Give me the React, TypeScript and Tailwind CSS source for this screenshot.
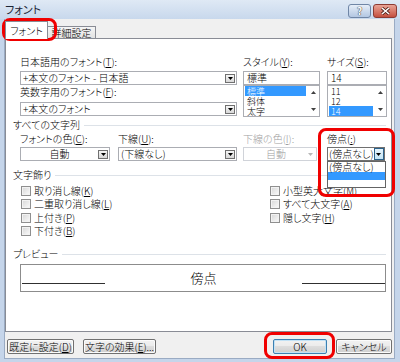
import React from 'react'
import clsx from 'clsx'

const jp = "font-['Noto_Sans_CJK_JP',sans-serif] [font-feature-settings:'palt']"

function Key({ k }: { k: string }) {
  return <span className="underline underline-offset-[1px]">{k}</span>
}

function Label({ children, className }: { children: React.ReactNode; className?: string }) {
  return <div className={clsx('h-[12px] whitespace-nowrap leading-[12px]', className)}>{children}</div>
}

function Tri({ up, color = '#000' }: { up?: boolean; color?: string }) {
  return (
    <svg width="5" height="3" viewBox="0 0 5 3">
      <path d={up ? 'M2.5 0L5 3H0z' : 'M0 0h5L2.5 3z'} fill={color} />
    </svg>
  )
}

function ArrowBtn() {
  return (
    <div className="flex h-[9px] w-[10px] shrink-0 items-center justify-center border border-[#707070] bg-gradient-to-b from-[#f6f6f6] to-[#d8d8d8]">
      <Tri />
    </div>
  )
}

function Combo({ children, className, center }: { children: React.ReactNode; className?: string; center?: boolean }) {
  return (
    <div className={clsx('flex h-[14px] items-center border border-[#abadb3] bg-white pr-[1px]', className)}>
      <span className={clsx('flex-1 whitespace-nowrap leading-[12px]', center ? 'text-center' : 'pl-[2px]')}>
        {children}
      </span>
      <ArrowBtn />
    </div>
  )
}

function TextBox({ children, className }: { children: React.ReactNode; className?: string }) {
  return (
    <div className={clsx('h-[14px] border border-[#abadb3] bg-white pl-[3px] leading-[12px]', className)}>{children}</div>
  )
}

function ListBox({ items, selected }: { items: string[]; selected: number }) {
  return (
    <div className="flex h-[32px] border border-[#abadb3] bg-white">
      <div className="flex-1 pl-[1px] pr-[1px]">
        {items.map((it, i) => (
          <div
            key={it}
            className={clsx(
              'flex h-[10px] items-center pl-[2px] text-[9px] leading-[9px]',
              i === selected && 'bg-[#3399ff] text-white'
            )}
          >
            {it}
          </div>
        ))}
      </div>
      <div className="flex w-[12px] flex-col items-center justify-between py-[5px]">
        <Tri up color="#404040" />
        <Tri color="#404040" />
      </div>
    </div>
  )
}

function Section({ title, className }: { title: string; className?: string }) {
  return (
    <div className={clsx('flex h-[12px] items-center pl-[7px] pr-[5px]', className)}>
      <span className="whitespace-nowrap leading-[12px]">{title}</span>
      <div className="ml-[4px] h-px flex-1 bg-[#dde2e8]" />
    </div>
  )
}

function Check({ children }: { children: React.ReactNode }) {
  return (
    <div className="flex h-[13.5px] items-center">
      <span className="mr-[3px] h-[10px] w-[10px] shrink-0 border border-[#8f8f8f] bg-gradient-to-br from-[#d6d6d6] to-[#fbfbfb] shadow-[inset_0_0_0_1px_#f2f2f2]" />
      <span className="whitespace-nowrap leading-[12px]">{children}</span>
    </div>
  )
}

function Btn({ children, className, primary }: { children: React.ReactNode; className?: string; primary?: boolean }) {
  return (
    <div
      className={clsx(
        'flex h-[15px] items-center justify-center whitespace-nowrap rounded-[2px] border bg-[linear-gradient(#f2f2f2,#ebebeb_50%,#dddddd_50%,#cfcfcf)] leading-[12px]',
        primary ? 'border-[#3c7fb1] shadow-[inset_0_0_0_1px_#c2e2f6]' : 'border-[#707070] shadow-[inset_0_0_0_1px_#fbfbfb]',
        className
      )}
    >
      {children}
    </div>
  )
}

function RedBox({ className }: { className: string }) {
  return <div className={clsx('pointer-events-none absolute rounded-[8px] border-[3px] border-[#f00000]', className)} />
}

export default function App() {
  return (
    <div className={clsx('relative h-[362px] w-[400px] overflow-hidden bg-[#c5d5ea] text-[10px] font-light text-black', jp)}>
      {/* title bar */}
      <div className="flex h-[19px] items-start justify-between bg-gradient-to-b from-[#dfe9f5] to-[#c8d8ec] pl-[5px] pr-[3px]">
        <span className="mt-[2px] text-[11px] font-normal leading-[14px] text-[#1b2536]">フォント</span>
        <div className="mt-[4px] flex gap-[2px]">
          <div className="flex h-[14px] w-[23px] items-center justify-center rounded-[3px] border border-[#6f86a6] bg-gradient-to-b from-[#e6eef8] to-[#b3c7e2] text-[10px] font-bold leading-none text-white [text-shadow:0_0_1px_#333,0_0_1px_#333]">
            ?
          </div>
          <div className="flex h-[14px] w-[24px] items-center justify-center rounded-[3px] border border-[#8c3b33] bg-gradient-to-b from-[#e9a396] to-[#c44f3f]">
            <svg width="9" height="8" viewBox="0 0 9 8">
              <path d="M1 1l7 6M8 1L1 7" stroke="#4a1a14" strokeWidth="3" />
              <path d="M1 1l7 6M8 1L1 7" stroke="#fff" strokeWidth="1.6" />
            </svg>
          </div>
        </div>
      </div>

      {/* client */}
      <div className="ml-[4px] h-[340px] w-[391px] border-x border-b border-[#9aabc3] bg-[#f0f0f0] pt-[2px]">
        {/* tabs */}
        <div className="flex h-[17px] items-end">
          <div className="relative z-10 -mb-px flex h-[18px] w-[43px] items-center justify-center border-x border-t border-[#898c95] bg-white pt-[1px] leading-[12px]">
            フォント
          </div>
          <div className="flex h-[12px] w-[48px] items-center justify-center border-r border-t border-[#898c95] bg-gradient-to-b from-[#f5f5f5] to-[#e3e3e3] leading-[12px]">
            詳細設定
          </div>
        </div>

        {/* panel */}
        <div className="h-[294px] w-[387px] border border-[#898c95] bg-white pt-[17px]">
          <div className="flex pl-[14px]">
            <div className="w-[217px]">
              <Label>
                日本語用のフォント(<Key k="T" />):
              </Label>
              <Combo className="mt-[3px]">+本文のフォント - 日本語</Combo>
              <Label className="mt-[1px]">
                英数字用のフォント(<Key k="F" />):
              </Label>
              <Combo className="mt-[4px]">+本文のフォント</Combo>
            </div>
            <div className="ml-[6px] w-[77px]">
              <Label>
                スタイル(<Key k="Y" />):
              </Label>
              <TextBox className="mt-[3px]">標準</TextBox>
              <ListBox items={['標準', '斜体', '太字']} selected={0} />
            </div>
            <div className="ml-[7px] w-[60px]">
              <Label>
                サイズ(<Key k="S" />):
              </Label>
              <TextBox className="mt-[3px]">14</TextBox>
              <ListBox items={['11', '12', '14']} selected={2} />
            </div>
          </div>

          <Section className="mt-[2px]" title="すべての文字列" />
          <div className="mt-[2px] flex pl-[14px]">
            <div className="w-[90px]">
              <Label>
                フォントの色(<Key k="C" />):
              </Label>
              <Combo className="mt-[2px]" center>
                自動
              </Combo>
            </div>
            <div className="ml-[8px] w-[119px]">
              <Label>
                下線(<Key k="U" />):
              </Label>
              <Combo className="mt-[2px]">(下線なし)</Combo>
            </div>
            <div className="ml-[6px] w-[74px] text-[#a0a0a0]">
              <Label>
                下線の色(<Key k="I" />):
              </Label>
              <div className="mt-[2px] flex h-[14px] items-center border border-[#d0d3d9] bg-white pr-[3px]">
                <span className="flex-1 text-center leading-[12px]">自動</span>
                <Tri color="#b8b8b8" />
              </div>
            </div>
            <div className="ml-[10px] w-[58px]">
              <Label>
                傍点(<Key k=":" />)
              </Label>
              <div className="mt-[2px] flex h-[14px] items-center border border-[#707070] bg-white">
                <span className="flex-1 whitespace-nowrap pl-[1px] leading-[12px]">(傍点なし)</span>
                <div className="flex h-[12px] w-[12px] items-center justify-center border border-[#2c628b] bg-gradient-to-b from-[#e5f4fc] to-[#c4e5f6]">
                  <Tri />
                </div>
              </div>
            </div>
          </div>

          <Section className="mt-[8px]" title="文字飾り" />
          <div className="mt-[3px] flex pl-[15px]">
            <div className="w-[249px]">
              <Check>
                取り消し線(<Key k="K" />)
              </Check>
              <Check>
                二重取り消し線(<Key k="L" />)
              </Check>
              <Check>
                上付き(<Key k="P" />)
              </Check>
              <Check>
                下付き(<Key k="B" />)
              </Check>
            </div>
            <div>
              <Check>
                小型英大文字(<Key k="M" />)
              </Check>
              <Check>
                すべて大文字(<Key k="A" />)
              </Check>
              <Check>
                隠し文字(<Key k="H" />)
              </Check>
            </div>
          </div>

          <Section className="mt-[10px]" title="プレビュー" />
          <div className="ml-[14px] mt-[4px] flex h-[28px] w-[366px] items-end border border-[#8c8c8c] pb-[7px] pl-[1px]">
            <div className="h-px w-[83px] bg-[#303030]" />
            <div className="flex-1 text-center text-[13px] leading-[13px]">傍点</div>
            <div className="h-px w-[83px] bg-[#303030]" />
          </div>
        </div>

        {/* buttons */}
        <div className="mt-[7px] flex justify-between px-[2px]">
          <div className="flex gap-[9px]">
            <Btn className="w-[67px]">
              既定に設定(<Key k="D" />)
            </Btn>
            <Btn className="w-[73px]">
              文字の効果(<Key k="E" />)...
            </Btn>
          </div>
          <div className="flex gap-[9px]">
            <Btn className="w-[54px]" primary>
              OK
            </Btn>
            <Btn className="w-[56px]">キャンセル</Btn>
          </div>
        </div>
      </div>

      {/* open dropdown list for 傍点 */}
      <div className="absolute left-[327px] top-[161px] h-[27px] w-[59px] border border-[#646464] bg-white">
        <div className="h-[10px] whitespace-nowrap pl-[1px] leading-[10px]">(傍点なし)</div>
        <div className="h-[8px] bg-[#3399ff]" />
      </div>

      <RedBox className="left-[2px] top-[18px] h-[23px] w-[55px]" />
      <RedBox className="left-[318px] top-[128px] h-[69px] w-[77px]" />
      <RedBox className="left-[264px] top-[332px] h-[27px] w-[71px]" />
    </div>
  )
}
